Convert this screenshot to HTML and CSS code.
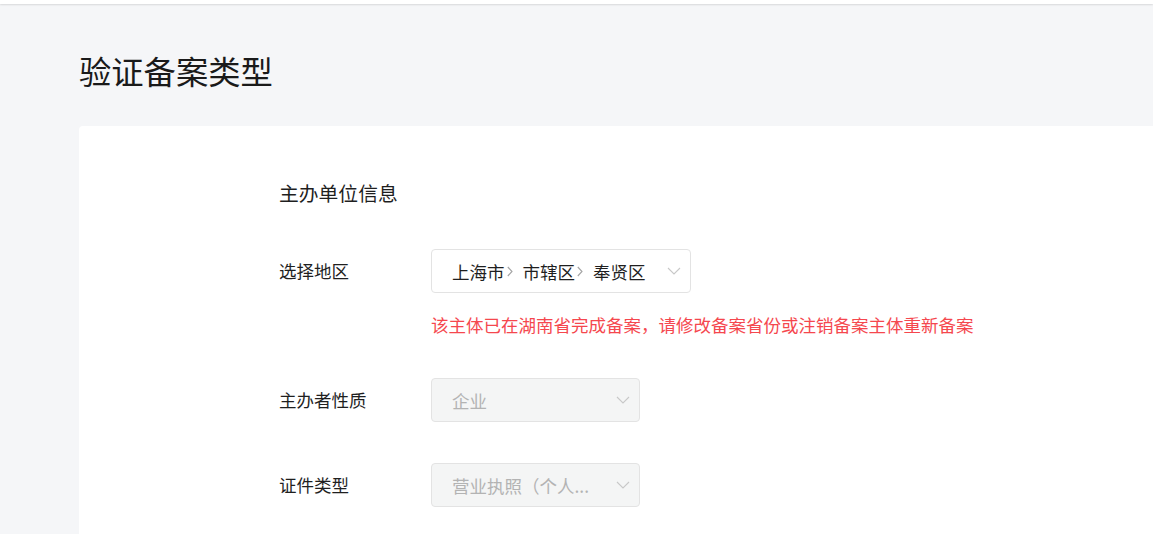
FILE: index.html
```html
<!DOCTYPE html>
<html lang="zh-CN">
<head>
<meta charset="utf-8">
<link rel="stylesheet" href="styles.css">
</head>
<body>
<div class="topbar"></div>
<main class="page">
  <h1 class="title">验证备案类型</h1>
  <section class="card">
    <div class="form">
      <div class="section-title">主办单位信息</div>
      <div class="row row-region">
        <div class="label">选择地区</div>
        <div class="field">
          <div class="select select-region">
            <span class="value">上海市<svg class="sep" width="6" height="11" viewBox="0 0 6 11"><path d="M0.8 1l4.2 4.5-4.2 4.5" fill="none" stroke="#a3a3a3" stroke-width="1.1"/></svg>市辖区<svg class="sep" width="6" height="11" viewBox="0 0 6 11"><path d="M0.8 1l4.2 4.5-4.2 4.5" fill="none" stroke="#a3a3a3" stroke-width="1.1"/></svg>奉贤区</span>
            <svg class="chev" width="14" height="8" viewBox="0 0 14 8"><path d="M1 1l6 6 6-6" fill="none" stroke="#c8c8c8" stroke-width="1.1"/></svg>
          </div>
          <div class="error">该主体已在湖南省完成备案，请修改备案省份或注销备案主体重新备案</div>
        </div>
      </div>
      <div class="row row-nature">
        <div class="label">主办者性质</div>
        <div class="field">
          <div class="select disabled">
            <span class="value">企业</span>
            <svg class="chev" width="14" height="8" viewBox="0 0 14 8"><path d="M1 1l6 6 6-6" fill="none" stroke="#c8c8c8" stroke-width="1.1"/></svg>
          </div>
        </div>
      </div>
      <div class="row row-cert">
        <div class="label">证件类型</div>
        <div class="field">
          <div class="select disabled">
            <span class="value">营业执照（个人...</span>
            <svg class="chev" width="14" height="8" viewBox="0 0 14 8"><path d="M1 1l6 6 6-6" fill="none" stroke="#c8c8c8" stroke-width="1.1"/></svg>
          </div>
        </div>
      </div>
    </div>
  </section>
</main>
</body>
</html>
```

FILE: styles.css
```css
html, body {
  margin: 0;
  padding: 0;
  height: 100%;
  overflow: hidden;
}
body {
  background: #f5f6f8;
  font-family: "Noto Sans CJK SC", "Noto Sans", sans-serif;
  color: #1f1f1f;
}
.topbar {
  height: 4px;
  background: #ffffff;
  box-shadow: 0 1px 2px rgba(0, 0, 0, 0.12);
  position: relative;
  z-index: 1;
}
.page {
  padding-left: 79px;
}
.title {
  margin: 0;
  padding-top: 44px;
  height: 78px;
  font-size: 32.3px;
  font-weight: 400;
  line-height: 44px;
  color: #1a1a1a;
}
.card {
  background: #ffffff;
  border-radius: 4px 0 0 0;
  height: 500px;
}
.form {
  padding-left: 200px;
  padding-top: 55px;
}
.section-title {
  font-size: 19.8px;
  line-height: 24px;
  height: 24px;
}
.row {
  display: flex;
  align-items: flex-start;
}
.row-region {
  margin-top: 44px;
}
.row-nature {
  margin-top: 41px;
}
.row-cert {
  margin-top: 41px;
}
.label {
  width: 152px;
  font-size: 17.5px;
  line-height: 44px;
}
.select {
  box-sizing: border-box;
  width: 209px;
  height: 44px;
  border: 1px solid #e3e3e3;
  border-radius: 4px;
  display: flex;
  align-items: center;
  justify-content: space-between;
  padding: 0 9px 0 20px;
  font-size: 17.5px;
  background: #ffffff;
}
.select-region {
  width: 260px;
}
.select .value {
  white-space: nowrap;
  display: flex;
  align-items: center;
}
.sep {
  display: block;
  margin: 1px 10px 0 2px;
}
.select.disabled {
  background: #f4f5f5;
  color: #b3b3b3;
}
.chev {
  display: block;
}
.error {
  color: #f5474e;
  font-size: 17.5px;
  line-height: 24px;
  margin-top: 20px;
}
```
